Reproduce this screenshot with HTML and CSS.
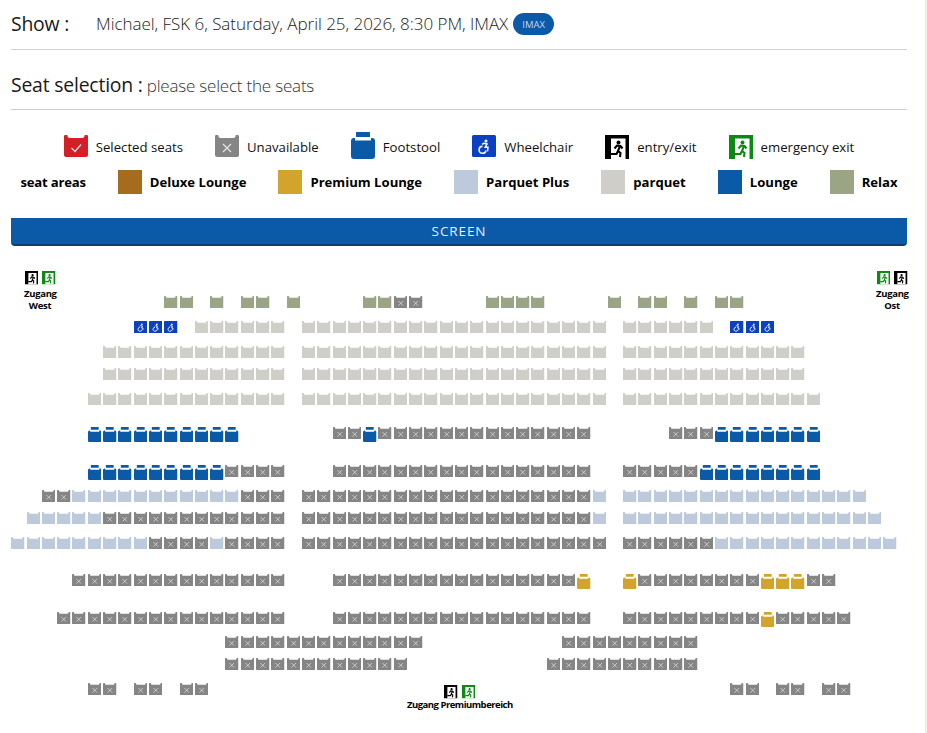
FILE: index.html
```html
<!DOCTYPE html>
<html lang="en">
<head>
<meta charset="utf-8">
<title>Seat selection</title>
<link rel="stylesheet" href="styles.css">
</head>
<body>
<svg class="sprites" aria-hidden="true">
  <symbol id="seat" viewBox="0 0 24 22">
    <path d="M0 1.2Q0 0 1.2 0H3.2Q3.6 3 5 3H19Q20.400 3 20.800 0H22.800Q24 0 24 1.200V20Q24 22 22 22H2Q0 22 0 20Z"/>
  </symbol>
  <symbol id="seat-x" viewBox="0 0 24 22">
    <path d="M0 1.2Q0 0 1.2 0H3.2Q3.6 3 5 3H19Q20.400 3 20.800 0H22.800Q24 0 24 1.200V20Q24 22 22 22H2Q0 22 0 20Z"/>
    <path class="mark" d="M8 9l8 8M16 9l-8 8"/>
  </symbol>
  <symbol id="seat-ok" viewBox="0 0 24 22">
    <path d="M0 1.2Q0 0 1.2 0H3.2Q3.6 3 5 3H19Q20.400 3 20.800 0H22.800Q24 0 24 1.200V20Q24 22 22 22H2Q0 22 0 20Z"/>
    <path class="mark" d="M7.500 13l3.500 3.500 6-7"/>
  </symbol>
  <symbol id="stool" viewBox="0 0 24 27">
    <rect x="5" width="14" height="5" rx=".6"/>
    <path d="M0 9Q0 6 3 6H4V8.500H20V6H21Q24 6 24 9V24Q24 27 21 27H3Q0 27 0 24Z"/>
  </symbol>
  <symbol id="wheel" viewBox="0 0 24 22">
    <rect width="24" height="22" rx="1.500"/>
    <g class="glyph">
      <circle class="dot" cx="14" cy="6" r="1.500"/>
      <path d="M10 9.400L12 8.200 15 9 13.200 12.300H16L15.500 16.300"/>
      <path d="M10.500 11.300A3.500 3.500 0 1 0 14 15.500"/>
    </g>
  </symbol>
  <symbol id="exit" viewBox="0 0 24 24">
    <rect width="24" height="24"/>
    <rect class="door" x="6" y="3.500" width="14.500" height="20.500"/>
    <g class="runner">
      <circle class="head" cx="13.500" cy="7.500" r="2"/>
      <path d="M9.500 13.500L12 10.500 15.500 11 17.500 13.500M15 11L13 16 15.500 18 15 22M13 16L11.500 19H6"/>
    </g>
  </symbol>
</svg>

<main class="page">
  <header class="line show-line">
    <h1 class="line-title">Show :</h1>
    <p class="show-text">Michael, FSK 6, Saturday, April 25, 2026, 8:30 PM, IMAX</p>
    <span class="badge">IMAX</span>
  </header>
  <section class="line seat-line">
    <h2 class="line-title">Seat selection :</h2>
    <p class="seat-hint">please select the seats</p>
  </section>

  <ul class="legend legend-icons">
    <li class="legend-item"><svg class="legend-icon selected" viewBox="0 -3 24 27"><use href="#seat-ok" width="24" height="22"/></svg><span>Selected seats</span></li>
    <li class="legend-item"><svg class="legend-icon unavailable" viewBox="0 -3 24 27"><use href="#seat-x" width="24" height="22"/></svg><span>Unavailable</span></li>
    <li class="legend-item"><svg class="legend-icon lounge" viewBox="0 0 24 27"><use href="#stool" width="24" height="27"/></svg><span>Footstool</span></li>
    <li class="legend-item"><svg class="legend-icon chair" viewBox="0 -3 24 27"><use href="#wheel" width="24" height="22"/></svg><span>Wheelchair</span></li>
    <li class="legend-item"><svg class="legend-icon black" viewBox="0 -3 24 27"><use href="#exit" width="24" height="24"/></svg><span>entry/exit</span></li>
    <li class="legend-item"><svg class="legend-icon green" viewBox="0 -3 24 27"><use href="#exit" width="24" height="24"/></svg><span>emergency exit</span></li>
  </ul>
  <ul class="legend legend-areas">
    <li class="area-title">seat areas</li>
    <li class="legend-item"><i class="swatch bg-deluxe"></i><span>Deluxe Lounge</span></li>
    <li class="legend-item"><i class="swatch bg-premium"></i><span>Premium Lounge</span></li>
    <li class="legend-item"><i class="swatch bg-plus"></i><span>Parquet Plus</span></li>
    <li class="legend-item"><i class="swatch bg-parquet"></i><span>parquet</span></li>
    <li class="legend-item"><i class="swatch bg-lounge"></i><span>Lounge</span></li>
    <li class="legend-item"><i class="swatch bg-relax"></i><span>Relax</span></li>
  </ul>

  <div class="screen">SCREEN</div>

  <section class="plan">
    <div class="seats" id="seats"></div>

    <div class="door-sign sign-west">
      <div class="sign-icons">
        <svg class="sign-icon black" viewBox="0 0 24 24"><use href="#exit"/></svg>
        <svg class="sign-icon green" viewBox="0 0 24 24"><use href="#exit"/></svg>
      </div>
      <p>Zugang<br>West</p>
    </div>
    <div class="door-sign sign-east">
      <div class="sign-icons">
        <svg class="sign-icon green" viewBox="0 0 24 24"><use href="#exit"/></svg>
        <svg class="sign-icon black" viewBox="0 0 24 24"><use href="#exit"/></svg>
      </div>
      <p>Zugang<br>Ost</p>
    </div>
    <div class="door-sign sign-premium">
      <div class="sign-icons">
        <svg class="sign-icon black" viewBox="0 0 24 24"><use href="#exit"/></svg>
        <svg class="sign-icon green" viewBox="0 0 24 24"><use href="#exit"/></svg>
      </div>
      <p>Zugang Premiumbereich</p>
    </div>
  </section>
</main>
<script src="seats.js"></script>
</body>
</html>
```

FILE: styles.css
```css
* { box-sizing: border-box; }
html, body { margin: 0; padding: 0; background: #fff; }
body { width: 927px; height: 733px; overflow: hidden; font-family: "Open Sans", "Liberation Sans", sans-serif; color: #111; }
.sprites { display: none; }
.page { width: 927px; height: 733px; padding: 0 18px 0 11px; border-right: 2px solid #efeeea; }

.line { display: flex; align-items: center; border-bottom: 1px solid #d0d0d0; }
.show-line { height: 50px; padding-bottom: 2px; }
.seat-line { height: 60px; padding-top: 10px; }
.line-title { margin: 0; font-size: 19.400px; font-weight: 400; color: #1a1a1a; letter-spacing: -.2px; }
.show-line .line-title { width: 85px; }
.show-text { margin: 0; font-size: 17px; font-weight: 300; color: #222; letter-spacing: -.04px; }
.badge { margin-left: 5px; width: 41px; height: 22px; border-radius: 11px; background: #0a5aa8; color: #c4d6ea; font-size: 9.500px; text-align: center; line-height: 23px; }
.seat-hint { margin: 2px 0 0 4px; font-size: 17px; font-weight: 300; color: #333; letter-spacing: -.2px; }

.legend { display: flex; justify-content: center; align-items: center; gap: 32px; margin: 0; padding: 0; list-style: none; }
.legend-icons { height: 27px; margin-top: 22px; font-size: 13.200px; }
.legend-icons span { padding-top: 3px; }
.legend-areas { height: 24px; margin-top: 11px; font-size: 13.120px; font-weight: 700; color: #000; }
.area-title { letter-spacing: -.2px; }
.legend-item { display: flex; align-items: center; gap: 8px; }
.legend-icon { width: 24px; height: 27px; display: block; fill: currentColor; }
.swatch { display: block; width: 24px; height: 24px; }
.bg-deluxe { background: #a66c1e; }
.bg-premium { background: #d3a42c; }
.bg-plus { background: #bccadb; }
.bg-parquet { background: #cfcec9; }
.bg-lounge { background: #0a5aa8; }
.bg-relax { background: #9aa585; }

.selected { color: #d32027; }
.unavailable { color: #858585; }
.lounge { color: #0a5aa8; }
.chair { color: #0b40c2; }
.black { color: #000; }
.green { color: #0a8a12; }
.parquet { color: #cfcec9; }
.plus { color: #bccadb; }
.relax { color: #9aa585; }
.premium { color: #d3a42c; }

.mark { fill: none; stroke: #e4e4e4; stroke-width: 1.300; }
.selected .mark { stroke: #f7d9d9; }
.glyph { fill: none; stroke: #fff; stroke-width: 1.500; }
.glyph .dot { fill: #fff; stroke: none; }
.door { fill: #fff; }
.runner { fill: none; stroke: currentColor; stroke-width: 2.100; }
.runner .head { fill: currentColor; stroke: none; }

.screen { height: 28px; margin-top: 24px; border-radius: 0 0 4px 4px; background: #0a5aa8; border-bottom: 2px solid #0b3d73; color: #e8eff7; font-size: 13.500px; letter-spacing: .9px; text-align: center; line-height: 27px; }

.plan { position: relative; height: 486px; padding-top: 50px; }
.seats { display: grid; margin-left: .3px; grid-template-columns: repeat(58, 15.300px); grid-template-rows: 25px 25px 22px 25px 34px 38px 25px 22px 25px 37px 38px 24px 22px 25px 16px; align-items: start; }
.seat { display: block; width: 13.500px; height: 12.400px; fill: currentColor; }
.seat.tall { height: 15.200px; }
.door-sign { position: absolute; font-size: 9.500px; font-weight: 700; line-height: 12px; text-align: center; color: #000; }
.door-sign p { margin: 3px 0 0; letter-spacing: -.3px; white-space: nowrap; }
.sign-icons { display: flex; justify-content: center; gap: 4px; }
.sign-icon { display: block; width: 13.500px; height: 13.500px; fill: currentColor; }
.sign-west { left: 13px; top: 25px; width: 32px; }
.sign-east { left: 865px; top: 25px; width: 32px; }
.sign-premium { left: 396px; top: 439px; width: 105px; }
.sign-premium p { margin-top: 0; letter-spacing: -.5px; }
```

FILE: seats.js
```js
var ROWS = [
  "r10-11 r13 r15-16 r18 r23-24 u25-26 r31-34 r39 r41-42 r44 r46-47",
  "w8-10 p12-17 p19-38 p40-45 w47-49",
  "p6-17 p19-38 p40-51",
  "p6-17 p19-38 p40-51",
  "p5-17 p19-38 p40-52",
  "l5-14 u21-22 l23 u24-37 u43-45 l46-52",
  "l5-13 u14-17 u21-37 u40-44 l45-52",
  "u2-3 t4-14 u15-17 u19-37 t38 t40-55",
  "t1-5 u6-17 u19-37 t38 t40-56",
  "t0-8 u9-12 t13 u14-17 u19-38 u40-45 t46-57",
  "u4-17 u21-36 g37 g40 u41-48 g49-51 u52-53",
  "u3-17 u21-37 u40-48 g49 u50-54",
  "u14-26 u36-44",
  "u14-25 u35-44",
  "u5-6 u8-9 u11-12 u47-48 u50-51 u53-54"
];
var KINDS = {
  r: ["relax", "seat"], p: ["parquet", "seat"], t: ["plus", "seat"],
  u: ["unavailable", "seat-x"], w: ["chair", "wheel"],
  l: ["lounge", "stool"], g: ["premium", "stool"]
};
var NS = "http://www.w3.org/2000/svg";
var host = document.getElementById("seats");
ROWS.forEach(function (row, r) {
  row.split(" ").forEach(function (tok) {
    var kind = KINDS[tok[0]];
    var parts = tok.slice(1).split("-");
    var from = +parts[0], to = +(parts[1] || parts[0]);
    for (var c = from; c <= to; c++) {
      var svg = document.createElementNS(NS, "svg");
      var stool = kind[1] === "stool";
      svg.setAttribute("class", "seat " + kind[0] + (stool ? " tall" : ""));
      svg.setAttribute("viewBox", stool ? "0 0 24 27" : "0 0 24 22");
      svg.style.gridColumn = c + 1;
      svg.style.gridRow = r + 1;
      var use = document.createElementNS(NS, "use");
      use.setAttribute("href", "#" + kind[1]);
      svg.appendChild(use);
      host.appendChild(svg);
    }
  });
});
```
